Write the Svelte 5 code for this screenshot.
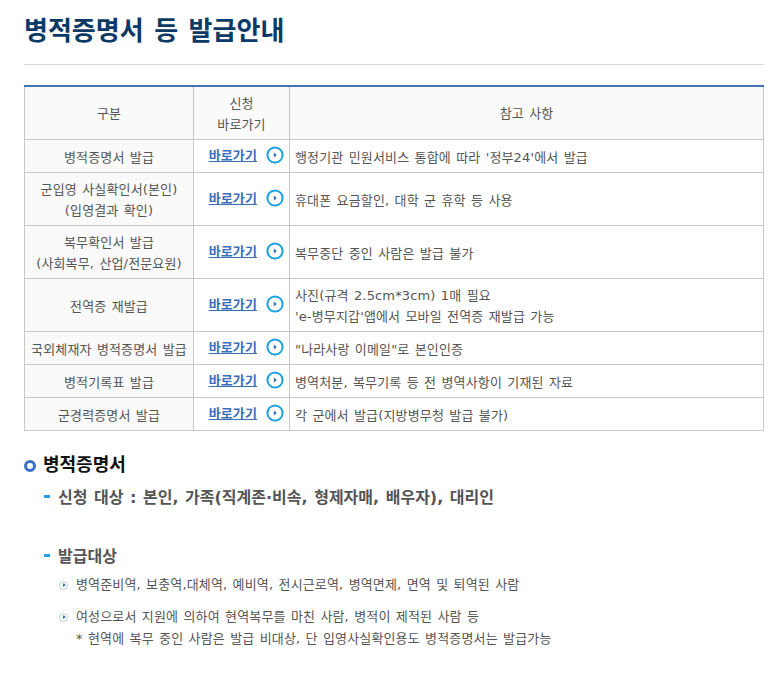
<script>
	const rows = [
		{ name: ['병적증명서 발급'], note: ['행정기관 민원서비스 통합에 따라 \'정부24\'에서 발급'], cls: 'h33' },
		{ name: ['군입영 사실확인서(본인)', '(입영결과 확인)'], note: ['휴대폰 요금할인, 대학 군 휴학 등 사용'], cls: 'h53' },
		{ name: ['복무확인서 발급', '(사회복무, 산업/전문요원)'], note: ['복무중단 중인 사람은 발급 불가'], cls: 'h53' },
		{ name: ['전역증 재발급'], note: ['사진(규격 2.5cm*3cm) 1매 필요', '\'e-병무지갑\'앱에서 모바일 전역증 재발급 가능'], cls: 'h53' },
		{ name: ['국외체재자 병적증명서 발급'], note: ['"나라사랑 이메일"로 본인인증'], cls: 'h33' },
		{ name: ['병적기록표 발급'], note: ['병역처분, 복무기록 등 전 병역사항이 기재된 자료'], cls: 'h33' },
		{ name: ['군경력증명서 발급'], note: ['각 군에서 발급(지방병무청 발급 불가)'], cls: 'h33' }
	];
</script>

<div class="page">
	<h1>병적증명서 등 발급안내</h1>
	<hr />

	<table>
		<colgroup>
			<col class="c1" />
			<col class="c2" />
			<col />
		</colgroup>
		<thead>
			<tr>
				<th>구분</th>
				<th class="apply">신청<br />바로가기</th>
				<th>참고 사항</th>
			</tr>
		</thead>
		<tbody>
			{#each rows as row}
				<tr class={row.cls}>
					<td class="name">
						{#each row.name as line, i}{#if i > 0}<br />{/if}{line}{/each}
					</td>
					<td class="go">
						<a href="#go">바로가기</a>
						<svg class="go-icon" width="18" height="18" viewBox="0 0 18 18" aria-hidden="true">
							<circle cx="9" cy="9" r="7.6" fill="#fff" stroke="#1ba0e2" stroke-width="2" />
							<path d="M7.8 6.4 L10.8 9 L7.8 11.6 Z" fill="#2f6fb5" />
						</svg>
					</td>
					<td class="note">
						{#each row.note as line, i}{#if i > 0}<br />{/if}{line}{/each}
					</td>
				</tr>
			{/each}
		</tbody>
	</table>

	<h2>병적증명서</h2>
	<h3 class="first">신청 대상 : 본인, 가족(직계존·비속, 형제자매, 배우자), 대리인</h3>
	<h3 class="second">발급대상</h3>
	<ul>
		<li>병역준비역, 보충역,대체역, 예비역, 전시근로역, 병역면제, 면역 및 퇴역된 사람</li>
		<li>여성으로서 지원에 의하여 현역복무를 마친 사람, 병적이 제적된 사람 등<br />* 현역에 복무 중인 사람은 발급 비대상, 단 입영사실확인용도 병적증명서는 발급가능</li>
	</ul>
</div>

<style>
	:global(body) {
		background: #fff;
	}

	.page {
		padding: 12px 18px 0 24px;
		font-family: "DejaVu Sans", "Noto Sans CJK KR", sans-serif;
		color: #555;
		font-size: 13px;
		letter-spacing: 0.15px;
		word-spacing: 1px;
	}

	h1 {
		margin: 0;
		font-size: 26px;
		line-height: 38px;
		font-weight: 700;
		color: #0c3a66;
		letter-spacing: 0;
		word-spacing: 1.5px;
	}

	hr {
		border: 0;
		border-top: 1px solid #d8d8d8;
		margin: 14px 0 20px;
	}

	table {
		width: 100%;
		border-collapse: collapse;
		table-layout: fixed;
		border-top: 2px solid #4472b8;
	}

	.c1 { width: 169px; }
	.c2 { width: 96px; }

	th, td {
		border: 1px solid #c8c8c8;
		text-align: center;
		padding: 0 5px;
		line-height: 21px;
		font-weight: 400;
	}

	td {
		padding-top: 2px;
	}

	th {
		background: #fafafa;
		height: 52px;
	}

	th.apply {
		padding-top: 2px;
		height: 50px;
	}

	.name {
		background: #fafafa;
	}

	.h33 { height: 33px; }
	.h53 { height: 53px; }

	.go {
		white-space: nowrap;
		padding: 0 0 2px 10px;
	}

	.go a {
		color: #3a6ebd;
		font-weight: 700;
		text-decoration: underline;
	}

	.go-icon {
		vertical-align: -4px;
		margin-left: 4px;
	}

	.note {
		text-align: left;
	}

	h2 {
		margin: 21px 0 0;
		padding-left: 19px;
		font-size: 18px;
		line-height: 26px;
		color: #111;
		position: relative;
		letter-spacing: 0;
		word-spacing: 0;
	}

	h2::before {
		content: '';
		position: absolute;
		left: 0;
		top: 8px;
		width: 6px;
		height: 6px;
		border: 3px solid #3a70c4;
		border-radius: 50%;
	}

	h3 {
		margin: 0;
		padding-left: 34px;
		font-size: 16px;
		line-height: 24px;
		color: #555;
		position: relative;
		letter-spacing: 0;
		word-spacing: 1px;
	}

	h3::before {
		content: '';
		position: absolute;
		left: 20px;
		top: 9px;
		width: 6px;
		height: 3px;
		background: #2a9fe8;
	}

	.first { margin-top: 8px; }
	.second { margin-top: 35px; }

	ul {
		list-style: none;
		margin: 5px 0 0;
		padding: 0 0 0 52px;
	}

	li {
		line-height: 22px;
		margin-bottom: 10px;
		position: relative;
	}

	li::before {
		content: '';
		position: absolute;
		left: -17px;
		top: 7px;
		width: 7px;
		height: 7px;
		border: 1px solid #c4ccd8;
		border-radius: 50%;
	}

	li::after {
		content: '';
		position: absolute;
		left: -13px;
		top: 9px;
		border-left: 3px solid #3f6fb8;
		border-top: 2.5px solid transparent;
		border-bottom: 2.5px solid transparent;
	}
</style>
